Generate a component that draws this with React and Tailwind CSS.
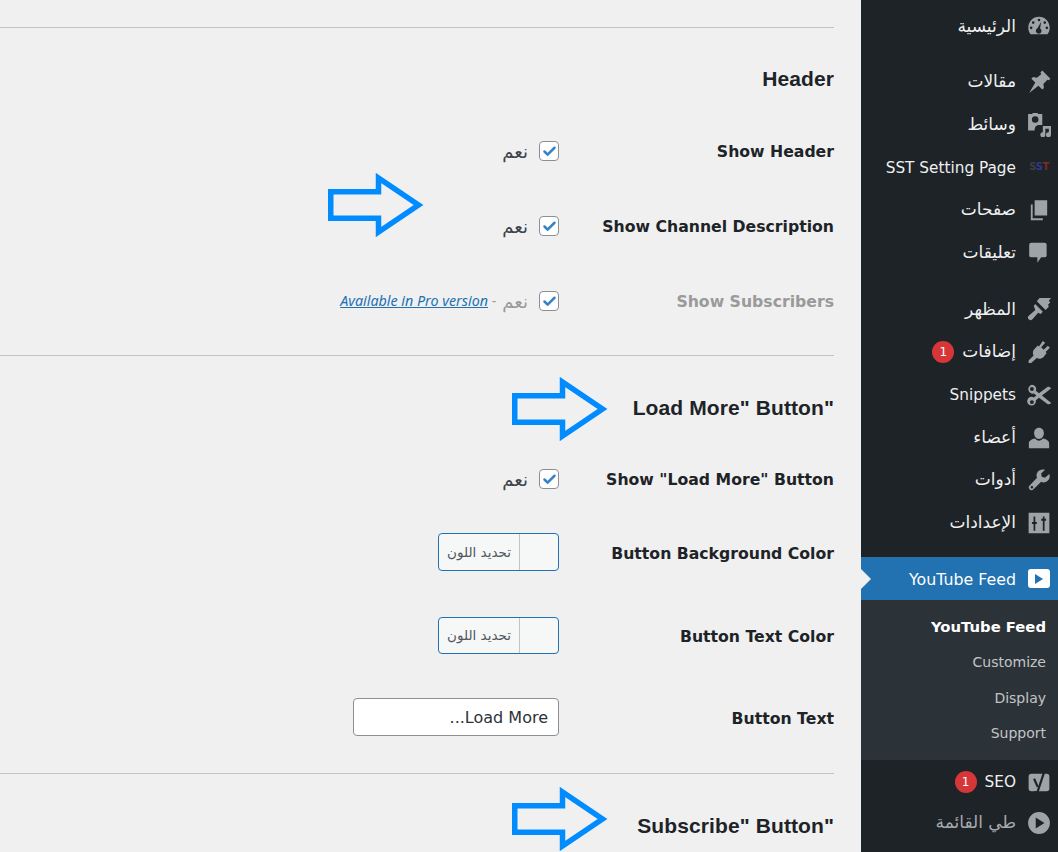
import { Check } from "lucide-react";

const topMenu = [
  { label: "مقالات", icon: "pin", mt: "mt-[13px]", ar: true },
  { label: "وسائط", icon: "media", ar: true },
  { label: "SST Setting Page", icon: "sst" },
  { label: "صفحات", icon: "pages", ar: true },
  { label: "تعليقات", icon: "comment", ar: true },
  { label: "المظهر", icon: "brush", mt: "mt-[14px]", ar: true },
  { label: "إضافات", icon: "plug", badge: "1", ar: true },
  { label: "Snippets", icon: "scissors" },
  { label: "أعضاء", icon: "user", ar: true },
  { label: "أدوات", icon: "wrench", ar: true },
  { label: "الإعدادات", icon: "sliders", ar: true },
];

function MenuIcon({ name }) {
  if (name === "sst") {
    return (
      <span dir="ltr" className="flex w-[22px] justify-center text-[10px] font-bold leading-none tracking-[-0.5px]">
        <span className="text-[#3a3f45]">S</span>
        <span className="text-[#2d3a8c]">S</span>
        <span className="text-[#7c2a2a]">T</span>
      </span>
    );
  }
  const paths = {
    gauge: (
      <path
        fillRule="evenodd"
        d="M11 2.500C5.500 2.500 1.200 7 1.200 12.500c0 2.300.7 4.300 2 6h15.600c1.300-1.700 2-3.700 2-6C20.800 7 16.500 2.500 11 2.500zM11 4.300a1.200 1.200 0 1 1 0 2.400 1.200 1.200 0 0 1 0-2.400zM5.700 6.700a1.200 1.200 0 1 1 0 2.400 1.200 1.200 0 0 1 0-2.400zM16.300 6.700a1.200 1.200 0 1 1 0 2.400 1.200 1.200 0 0 1 0-2.400zM3.800 11.500a1.200 1.200 0 1 1 0 2.400 1.200 1.200 0 0 1 0-2.400zM18.200 11.500a1.200 1.200 0 1 1 0 2.400 1.200 1.200 0 0 1 0-2.400zM13 7l-1 6.200a2.600 2.600 0 1 1-2.400-.1L13 7z"
      />
    ),
    pin: <path d="M14 .5L21.500 8 20 9.500 18.700 8.900 15 12.800 15.500 16.400 14 17.900 10.500 14.400 2 21 7.600 11.500 4 8 5.500 6.500 9.100 7 13 4 12.300 2.200z" />,
    media: (
      <path
        fillRule="evenodd"
        d="M1 1h3.500l1-1h4l1 1H14v10h-3.300a4.500 4.500 0 0 0-3.700 4.500V16H1zM7.500 3a3 3 0 1 0 0 6 3 3 0 0 0 0-6zM14.500 12H22v8a2.300 2.300 0 1 1-2-2.300V14.500h-3.200V20a2.300 2.300 0 1 1-2.300-2.300z"
      />
    ),
    pages: <path d="M7 2h11.500v14H7zM3.500 6h1.700v12.500H14.500v2H3.500z" />,
    comment: <path d="M4 1.500h12a2 2 0 0 1 2 2V13a2 2 0 0 1-2 2h-3l-3.500 5V15H4a2 2 0 0 1-2-2V3.500a2 2 0 0 1 2-2z" />,
    brush: <path d="M11.500 1H22l-2 2.500 1.300 1.500-2 2 .7 2-3 3-8-8zM7.500 6.500l7 7-2 2-2.300-1L5 20.500a2.200 2.200 0 0 1-3.400-3.400l6-5.200-1.400-3.600z" />,
    plug: <path d="M14.500 1l2.200 1.500-3.700 4.200 2.300 2.200 3.800-3.700L21 7l-4 4 1 1-2.800 3.500c-2 1.800-4.200 2-6.200 1L3.800 21H1.500v-2.200l4.500-4.600c-1-2-.8-4.200.8-6L10 5l1 1z" />,
    scissors: (
      <path
        fillRule="evenodd"
        d="M4.500 1.500a4 4 0 0 1 3.600 5.600L11 9.400l8-5.900c1.500 0 3 .5 3 1.500L13.700 11.500 22 18c0 1-1.500 1.500-3 1.500l-8-5.900-2.900 2.300A4 4 0 1 1 6.300 13.300l2.300-1.800-2.300-1.800A4 4 0 1 1 4.500 1.500zM4.500 3.700a1.800 1.800 0 1 0 0 3.600 1.800 1.800 0 0 0 0-3.600zM4.500 15.700a1.800 1.800 0 1 0 0 3.600 1.800 1.800 0 0 0 0-3.600z"
      />
    ),
    user: <path d="M11 1.500c2.800 0 4.500 2.300 4.500 5S13.800 12 11 12 6.500 9.200 6.500 6.500s1.700-5 4.500-5zM7.500 11.500c1 1.200 2.200 2 3.500 2s2.500-.8 3.500-2c3 .5 5.800 2 5.800 4.500v4.500H1.700V16c0-2.500 2.800-4 5.800-4.500z" />,
    wrench: (
      <path
        fillRule="evenodd"
        d="M20.500 5.500l-4 3.500-3-1-.5-3 3.500-3.500C13 1 10 2 9 5c-.5 1.500-.3 3 .2 4L2 16.500c-1.500 2 1.500 5 3.500 3.500l7.500-7.300c1 .5 2.500.7 4 .2 3-1 4.500-4 3.500-7.400zM4.500 16.500a1.200 1.200 0 1 1 0 2.400 1.200 1.200 0 0 1 0-2.400z"
      />
    ),
    sliders: (
      <path
        fillRule="evenodd"
        d="M1.500 1.500h19v19h-19zM6 5v5H4.500v2H6v6h1.600v-6H9v-2H7.600V5zM14.500 5v2H13v2h1.500v9h1.600V9h1.400V7h-1.400V5z"
      />
    ),
    yoast: (
      <>
        <rect x="1.500" y="3.500" width="19" height="16" rx="2.500" />
        <path d="M6.500 8l3.300 7.500" fill="none" stroke="#1d2327" strokeWidth="2" />
        <path d="M16 1L9.500 20.500H6.500" fill="none" stroke="#1d2327" strokeWidth="2" />
      </>
    ),
    collapse: <path fillRule="evenodd" d="M11 1a10 10 0 1 1 0 20 10 10 0 0 1 0-20zM8 6v10l8-5z" />,
  };
  return (
    <svg width="24" height="24" viewBox="0 0 22 22" fill="#9ea3a8">
      {paths[name]}
    </svg>
  );
}

function Badge({ children }) {
  return (
    <span className="mr-[-3px] flex h-[22px] w-[22px] items-center justify-center rounded-full bg-[#d63638] text-[12px] text-white">
      {children}
    </span>
  );
}

function MenuRow({ item }) {
  return (
    <div className={`flex h-[42.7px] items-center gap-[11px] pr-[7px] text-[#f0f0f1] ${item.mt || ""}`}>
      <span className="flex w-[24px] justify-center">
        <MenuIcon name={item.icon} />
      </span>
      <span className={item.ar ? "text-[17px]" : "pt-[2px] text-[15.3px]"}>{item.label}</span>
      {item.badge && <Badge>{item.badge}</Badge>}
    </div>
  );
}

function Sidebar() {
  return (
    <aside dir="rtl" className="h-[852px] w-[197px] shrink-0 overflow-hidden bg-[#1d2327]">
      <div className="mt-[5px]">
        <MenuRow item={{ label: "الرئيسية", icon: "gauge", ar: true }} />
      </div>
      {topMenu.map((item) => (
        <MenuRow key={item.label} item={item} />
      ))}
      <div className="relative mt-[13px] flex h-[43px] items-center gap-[11px] bg-[#2271b1] pr-[7px] text-[15.8px] text-white">
        <span className="flex w-[24px] justify-center">
          <span className="flex h-[19px] w-[22px] items-center justify-center rounded-[3px] bg-white">
            <span className="h-0 w-0 border-y-[5px] border-l-[8px] border-y-transparent border-l-[#2271b1]" />
          </span>
        </span>
        <span className="pt-[2px]">YouTube Feed</span>
        <span className="absolute left-0 top-[12px] h-0 w-0 border-y-[10px] border-l-[10px] border-y-transparent border-l-[#f0f0f1]" />
      </div>
      <div className="flex h-[160px] flex-col justify-center bg-[#2c3338] pr-[12px] text-[14px] text-[#c3c4c7]">
        <div className="flex h-[35.5px] items-center text-[14.8px] font-bold text-white">YouTube Feed</div>
        <div className="flex h-[35.5px] items-center">Customize</div>
        <div className="flex h-[35.5px] items-center">Display</div>
        <div className="flex h-[35.5px] items-center">Support</div>
      </div>
      <MenuRow item={{ label: "SEO", icon: "yoast", badge: "1" }} />
      <div className="flex h-[40px] items-center gap-[11px] pr-[7px] text-[17px] text-[#a7aaad]">
        <span className="flex w-[24px] justify-center">
          <MenuIcon name="collapse" />
        </span>
        <span>طي القائمة</span>
      </div>
    </aside>
  );
}

function Arrow() {
  return (
    <svg width="96" height="64" viewBox="0 0 96 64" fill="none" className="block">
      <path d="M2.750 18.750H50.500V5L90.500 32L50.500 59V45.250H2.750Z" stroke="#008cff" strokeWidth="5.500" />
    </svg>
  );
}

function CheckBox() {
  return (
    <span className="flex h-[20px] w-[20px] items-center justify-center rounded-[4px] border border-[#8c8f94] bg-white">
      <Check size={15} strokeWidth={4} className="text-[#3582c4]" />
    </span>
  );
}

function Toggle({ muted, extra }) {
  return (
    <div className="flex items-center gap-[11px]">
      <CheckBox />
      <span className={`text-[18px] ${muted ? "text-[#9a9a9a]" : "text-[#3c434a]"}`}>نعم</span>
      {extra}
    </div>
  );
}

function ColorButton({ h = "h-[38px]" }) {
  return (
    <div className={`flex ${h} w-[121px] items-center overflow-hidden rounded-[4px] border border-[#2271b1] bg-[#f6f7f7]`}>
      <span className="h-full w-[39px] border-l border-[#c3c4c7]" />
      <span className="flex-1 text-center text-[13.5px] text-[#50575e]">تحديد اللون</span>
    </div>
  );
}

function Row({ label, h, muted, children, arrow, low }) {
  return (
    <div className={`relative flex items-center ${h}`}>
      <div className={`w-[275px] shrink-0 ${low ? "pt-[4px]" : "pt-[2px]"} text-[15.7px] font-bold ${muted ? "text-[#9a9a9a]" : "text-[#1d2327]"}`}>
        {label}
      </div>
      {children}
      {arrow}
    </div>
  );
}

function Heading({ children, arrow, className }) {
  return (
    <div className={`relative flex items-center font-['Liberation_Sans',sans-serif] text-[21px] font-bold tracking-[0.1px] text-[#1d2327] ${className}`}>
      {children}
      {arrow}
    </div>
  );
}

export default function App() {
  return (
    <div
      dir="ltr"
      className="flex h-[852px] w-[1058px] overflow-hidden bg-[#f0f0f1] font-['DejaVu_Sans',sans-serif]"
    >
      <main dir="rtl" className="w-[861px] shrink-0 pl-0 pr-[27px]">
        <hr className="mt-[27px] border-[#c3c4c7]" />
        <Heading className="mt-[37px] h-[28px]">Header</Heading>
        <Row label="Show Header" h="mt-[36px] h-[44px]">
          <Toggle />
        </Row>
        <Row
          label="Show Channel Description"
          h="mt-[31px] h-[44px]"
          arrow={
            <div className="absolute right-[410px] top-[-31px]">
              <Arrow />
            </div>
          }
        >
          <Toggle />
        </Row>
        <Row label="Show Subscribers" h="mt-[31px] h-[44px]" muted>
          <Toggle
            muted
            extra={
              <span className="mr-[-5px] font-['Noto_Sans',sans-serif] text-[14.3px] text-[#9a9a9a]">
                -{" "}
                <a href="#" className="italic text-[#2271b1] underline">
                  Available in Pro version
                </a>
              </span>
            }
          />
        </Row>
        <hr className="mt-[32px] border-[#c3c4c7]" />
        <Heading
          className="mt-[38px] h-[28px]"
          arrow={
            <div className="absolute right-[226px] top-[-17px]">
              <Arrow />
            </div>
          }
        >
          "Load More" Button
        </Heading>
        <Row label='Show "Load More" Button' h="mt-[35px] h-[44px]">
          <Toggle />
        </Row>
        <Row label="Button Background Color" h="mt-[29px] h-[44px]" low>
          <ColorButton />
        </Row>
        <Row label="Button Text Color" h="mt-[39px] h-[44px]" low>
          <ColorButton h="h-[37px]" />
        </Row>
        <Row label="Button Text" h="mt-[38px] h-[44px]" low>
          <input
            readOnly
            value="Load More..."
            className="h-[38px] w-[206px] rounded-[4px] border border-[#8c8f94] bg-white px-[10px] text-[16px] text-[#2c3338]"
          />
        </Row>
        <hr className="mt-[34px] border-[#c3c4c7]" />
        <Heading
          className="mt-[38px] h-[28px]"
          arrow={
            <div className="absolute right-[226px] top-[-25px]">
              <Arrow />
            </div>
          }
        >
          "Subscribe" Button
        </Heading>
      </main>
      <Sidebar />
    </div>
  );
}
